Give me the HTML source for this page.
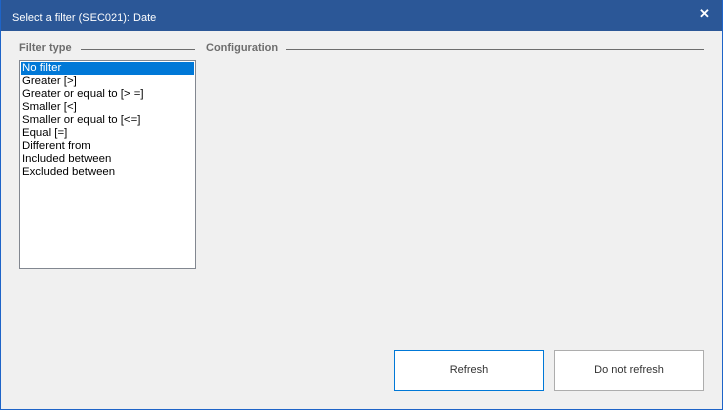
<!DOCTYPE html>
<html><head><style>
*{margin:0;padding:0;box-sizing:border-box}
body{width:723px;height:410px;overflow:hidden;background:#f0f0f0;font-family:"Liberation Sans",sans-serif;font-size:11px;position:relative}
.win{position:absolute;left:0;top:0;width:723px;height:410px;border:1px solid #1e64c8;border-top:none}
.title{position:absolute;left:0;top:0;width:723px;height:31px;background:#2b5797;color:#fff;font-size:11px;padding:12px 0 0 12px}
.x{position:absolute;left:699px;top:6px;color:#fff;font-size:13px;font-weight:bold}
.lbl{position:absolute;top:42px;font-weight:bold;color:#6d6d6d;font-size:11px;background:#f0f0f0;padding-right:3px}
.line{position:absolute;top:49px;height:1px;background:#6d6d6d}
.list{position:absolute;left:19px;top:60px;width:177px;height:209px;background:#fff;border:1px solid #828790;font-size:11.4px}
.list div{height:13px;line-height:13px;padding-left:2px;color:#000}
.list .sel{background:#0078d7;color:#fff;margin:1px 1px 0 1px;padding-left:1px}
.btn{position:absolute;top:350px;width:150px;height:41px;background:#fff;border:1px solid #adadad;text-align:center;line-height:39px;color:#333;font-size:11px}
</style></head><body>
<div class="title">Select a filter (SEC021): Date</div>
<div class="x">✕</div>
<div class="win"></div>
<div class="line" style="left:81px;width:114px"></div>
<div class="lbl" style="left:19px">Filter type</div>
<div class="line" style="left:286px;width:418px"></div>
<div class="lbl" style="left:206px">Configuration</div>
<div class="list">
<div class="sel">No filter</div>
<div>Greater [&gt;]</div>
<div>Greater or equal to [&gt; =]</div>
<div>Smaller [&lt;]</div>
<div>Smaller or equal to [&lt;=]</div>
<div>Equal [=]</div>
<div>Different from</div>
<div>Included between</div>
<div>Excluded between</div>
</div>
<div class="btn" style="left:394px;border-color:#0078d7">Refresh</div>
<div class="btn" style="left:554px">Do not refresh</div>
</body></html>
